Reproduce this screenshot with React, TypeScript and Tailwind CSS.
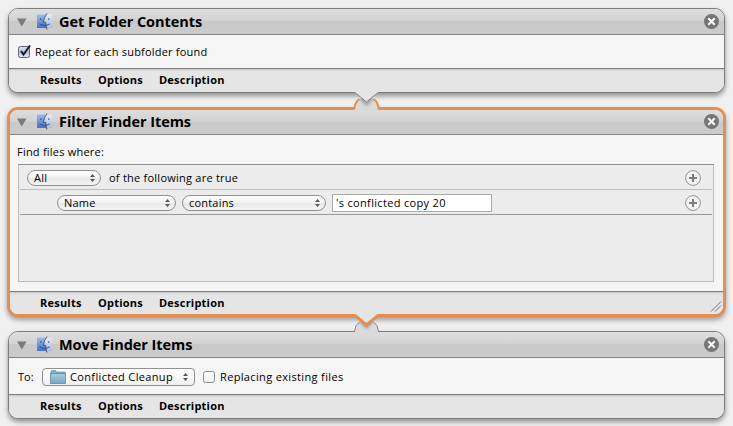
import type { ReactNode } from 'react';

function FinderIcon() {
  return (
    <svg width="17" height="17" viewBox="0 0 17 17" className="shrink-0">
      <defs>
        <linearGradient id="faceL" x1="0" y1="0" x2="0" y2="1">
          <stop offset="0" stopColor="#9dbcec" />
          <stop offset="1" stopColor="#3f74cc" />
        </linearGradient>
        <linearGradient id="faceR" x1="0" y1="0" x2="0" y2="1">
          <stop offset="0" stopColor="#e6ecf7" />
          <stop offset="1" stopColor="#a5bce6" />
        </linearGradient>
      </defs>
      <rect x="1" y="1.500" width="9" height="13.500" fill="url(#faceL)" />
      <path d="M10 1.500H16V15H10.200L9.700 9.500H7.300Q7.800 5 10 1.500Z" fill="url(#faceR)" />
      <path d="M11 0.500Q8 4.500 7.300 9.300H9.800Q9.600 13 11 16.500" fill="none" stroke="#3d4a63" strokeWidth="0.900" />
      <path d="M3.500 10.800Q8.500 14 13.800 10.800M4.800 5.200V7M12.800 5.200V7" fill="none" stroke="#33456b" strokeWidth="0.900" />
    </svg>
  );
}

function CloseIcon() {
  return (
    <svg width="15" height="15" viewBox="0 0 15 15" className="ml-auto shrink-0">
      <circle cx="7.500" cy="7.500" r="7.500" fill="#757575" />
      <path d="M4.300 4.300l6.400 6.400M10.700 4.300l-6.400 6.400" stroke="#fff" strokeWidth="2" />
    </svg>
  );
}

function Header({ title, selected = false }: { title: string; selected?: boolean }) {
  return (
    <div
      className={`flex h-[26px] shrink-0 items-center border-b border-[#838383] bg-[linear-gradient(#dedede,#d2d2d2_50%,#c9c9c9_50%,#cbcbcb)] ${selected ? '-mt-px pl-[7px] pr-[4px]' : 'pl-[8px] pr-[5px]'}`}
    >
      <svg width="10" height="9" viewBox="0 0 10 9" className="mt-[2px] shrink-0">
        <path d="M0 0.500H9.500L4.750 8.500Z" fill="#7b7b7b" />
      </svg>
      <div className="ml-[9px] flex">
        <FinderIcon />
      </div>
      <h2 className="ml-[6px] text-[14.5px] font-bold leading-[20px] tracking-[-0.06px]">{title}</h2>
      <CloseIcon />
    </div>
  );
}

function Footer({ selected = false }: { selected?: boolean }) {
  return (
    <div
      className={`flex flex-1 items-center border-t border-[#7d7d7d] bg-[#e5e5e5] text-[11px] font-bold tracking-[0.22px] shadow-[inset_0_2px_2px_-1px_#c2c2c2] ${selected ? 'pl-[30px]' : 'pb-[2px] pl-[31px]'}`}
    >
      <span className="w-[58px]">Results</span>
      <span className="w-[61px]">Options</span>
      <span>Description</span>
    </div>
  );
}

function Arrows() {
  return (
    <svg width="5" height="8" viewBox="0 0 5 8" className="ml-auto shrink-0">
      <path d="M0 3L2.500 0L5 3ZM0 5H5L2.500 8Z" fill="#585858" />
    </svg>
  );
}

function Popup({ label, className }: { label: string; className: string }) {
  return (
    <div
      className={`flex h-[16px] shrink-0 items-center rounded-full border border-[#909090] bg-[linear-gradient(#fff,#f1f1f1_50%,#e7e7e7_50%,#f4f4f4)] pl-[6px] pr-[5px] tracking-[0.2px] ${className}`}
    >
      <span>{label}</span>
      <Arrows />
    </div>
  );
}

function PlusButton() {
  return (
    <svg width="16" height="16" viewBox="0 0 16 16" className="ml-auto shrink-0">
      <circle cx="8" cy="8" r="7.400" fill="#f3f3f3" stroke="#929292" />
      <path d="M8 4v8M4 8h8" stroke="#7c7c7c" strokeWidth="2" />
    </svg>
  );
}

function Checkbox({ checked = false }: { checked?: boolean }) {
  return (
    <svg width="14" height="15" viewBox="0 0 14 15" className="shrink-0 overflow-visible">
      <defs>
        <linearGradient id="boxOn" x1="0" y1="0" x2="0" y2="1">
          <stop offset="0" stopColor="#dce2eb" />
          <stop offset="0.500" stopColor="#b4c1d3" />
          <stop offset="1" stopColor="#e4edf6" />
        </linearGradient>
        <linearGradient id="boxOff" x1="0" y1="0" x2="0" y2="1">
          <stop offset="0" stopColor="#fff" />
          <stop offset="1" stopColor="#ededed" />
        </linearGradient>
      </defs>
      <rect x="0.500" y="2.500" width="11" height="11" rx="2" fill={checked ? 'url(#boxOn)' : 'url(#boxOff)'} stroke={checked ? '#5c6575' : '#8c8c8c'} />
      {checked && <path d="M3 7L5.500 10.500L12 1.500" fill="none" stroke="#161b2b" strokeWidth="2" />}
    </svg>
  );
}

function Folder() {
  return (
    <svg width="16" height="14" viewBox="0 0 16 14" className="shrink-0">
      <defs>
        <linearGradient id="folder" x1="0" y1="0" x2="0" y2="1">
          <stop offset="0" stopColor="#a9cde0" />
          <stop offset="1" stopColor="#78a5c1" />
        </linearGradient>
      </defs>
      <path d="M1 3V1.500Q1 .5 2 .5H5.500L6.500 2H14.500Q15.500 2 15.500 4H1Z" fill="#86b2cb" stroke="#5e8ba8" strokeWidth="0.700" />
      <rect x="0.500" y="3.500" width="15" height="10" fill="url(#folder)" stroke="#5e8ba8" strokeWidth="0.800" />
    </svg>
  );
}

function Panel({ children, className }: { children: ReactNode; className: string }) {
  return (
    <section className={`flex shrink-0 flex-col overflow-hidden bg-[#f5f5f5] ${className}`}>
      {children}
    </section>
  );
}

function Connector({ className, lower, upper, upperWidth }: { className: string; lower: string; upper: string; upperWidth: number }) {
  return (
    <svg width="32" height="24" viewBox="0 0 32 24" className={`absolute left-[350px] ${className}`}>
      <defs>
        <filter id="soft" x="-30%" y="-30%" width="160%" height="180%">
          <feGaussianBlur stdDeviation="1.800" />
        </filter>
        <clipPath id="arch">
          <path d="M4.500 22V17Q5 11 9.500 8L16.500 5L23.500 8Q28 11 28.500 17V22Z" />
        </clipPath>
      </defs>
      <path d="M4.500 20V17Q5 11 9.500 8L16.500 5L23.500 8Q28 11 28.500 17V20Z" fill="#dadada" />
      <g clipPath="url(#arch)">
        <path d="M5 3L16.500 15L28 3Z" fill="#777" opacity="0.600" filter="url(#soft)" />
      </g>
      <path d="M4.500 18V17Q5 11 9.500 8M28.500 18V17Q28 11 23.500 8" fill="none" stroke={lower} strokeWidth={upperWidth === 1 ? 2 : 1} />
      <path d="M4.500 0H28.500V1.500L16.500 11.500L4.500 1.500Z" fill="#e5e5e5" />
      <path d="M4 1.500H5L16.500 11L28 1.500H29" fill="none" stroke={upper} strokeWidth={upperWidth} />
    </svg>
  );
}

const plain = 'rounded-[10px] border border-[#7d7d7d] shadow-[0_3px_5px_rgba(0,0,0,0.4)]';

export default function App() {
  return (
    <main className="relative flex h-[426px] w-[733px] flex-col overflow-hidden bg-[#f0f0f0] pt-[8px] font-['Open_Sans','Noto_Sans',sans-serif] text-[11px] leading-[14px] text-black">
      <Panel className={`mx-[8px] h-[85px] ${plain}`}>
        <Header title="Get Folder Contents" />
        <div className="flex h-[33px] items-center pl-[9px]">
          <Checkbox checked />
          <span className="ml-[3px] tracking-[0.2px]">Repeat for each subfolder found</span>
        </div>
        <Footer />
      </Panel>

      <Panel className="mx-[7px] mt-[14px] h-[210px] rounded-[11px] border-[3px] border-[#e58e51] shadow-[0_3px_5px_rgba(0,0,0,0.35)]">
        <Header title="Filter Finder Items" selected />
        <div className="flex h-[156px] flex-col pl-[8px] pr-[9px] pt-[10px]">
          <span className="ml-[-1px] tracking-[0.22px]">Find files where:</span>
          <div className="mt-[5px] flex h-[118px] flex-col border border-[#bcbcbc] border-t-[#8e8e8e] bg-[#ececec] px-px">
            <div className="flex h-[25px] items-center border-b border-[#bebebe] pl-[7px] pr-[11px] pt-[2px]">
              <Popup label="All" className="w-[74px]" />
              <span className="ml-[8px] tracking-[0.24px]">of the following are true</span>
              <PlusButton />
            </div>
            <div className="flex h-[25px] items-center border-b border-[#999] pl-[37px] pr-[11px] pt-[2px]">
              <Popup label="Name" className="w-[119px]" />
              <Popup label="contains" className="ml-[6px] w-[144px]" />
              <div className="ml-[6px] flex h-[18px] w-[160px] items-center border border-[#aaa] bg-white pl-[3px] tracking-[0.33px]">
                's conflicted copy 20
              </div>
              <PlusButton />
            </div>
          </div>
        </div>
        <Footer selected />
      </Panel>

      <Panel className={`mx-[8px] mt-[14px] h-[88px] ${plain}`}>
        <Header title="Move Finder Items" />
        <div className="flex h-[36px] items-center pl-[9px] pt-[2px]">
          <span className="w-[24px]">To:</span>
          <div className="flex h-[18px] w-[153px] items-center rounded-[4px] border border-[#909090] bg-[linear-gradient(#fff,#f8f8f8_50%,#efefef)] pl-[7px] pr-[6px]">
            <Folder />
            <span className="ml-[4px] tracking-[0.35px]">Conflicted Cleanup</span>
            <Arrows />
          </div>
          <div className="mb-[2px] ml-[8px] flex">
            <Checkbox />
          </div>
          <span className="ml-[3px] tracking-[0.35px]">Replacing existing files</span>
        </div>
        <Footer />
      </Panel>

      <Connector className="top-[91px]" lower="#e58e51" upper="#7d7d7d" upperWidth={1} />
      <Connector className="top-[314px]" lower="#858585" upper="#e58e51" upperWidth={3} />
      <svg width="12" height="12" viewBox="0 0 12 12" className="absolute left-[710px] top-[301px]">
        <path d="M1 10.500L11 0.500M5 10.500L11 4.500" stroke="#777" />
      </svg>
    </main>
  );
}
